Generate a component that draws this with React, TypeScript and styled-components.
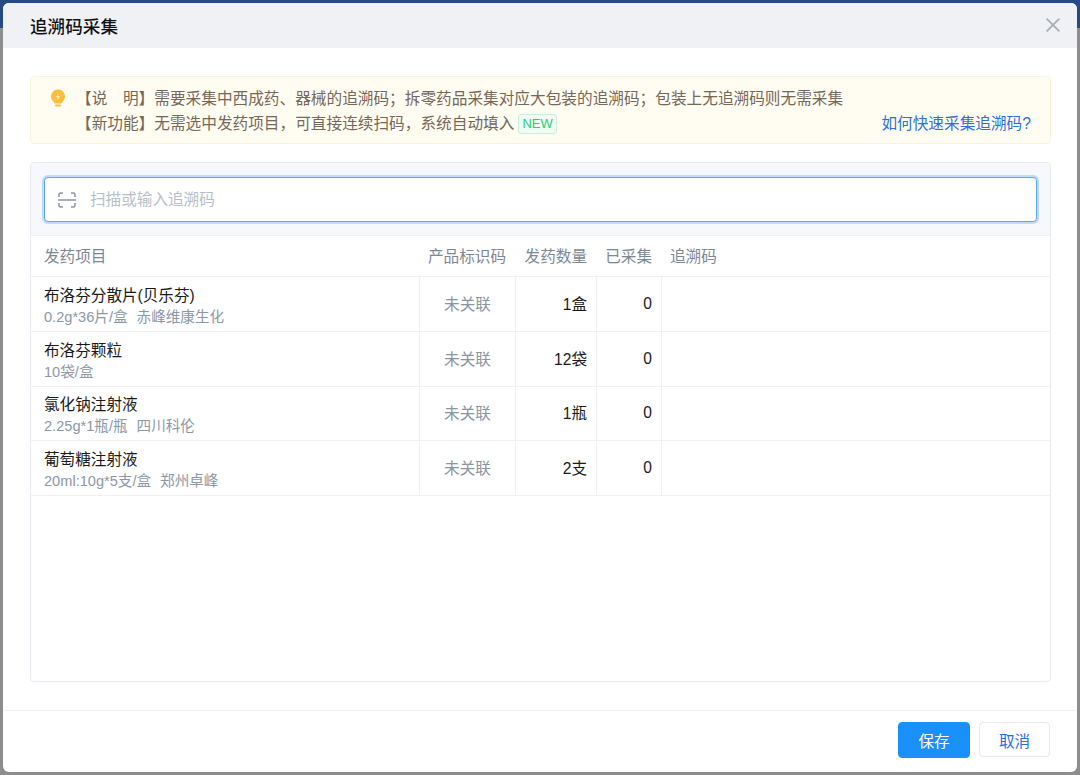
import React from 'react';
import styled, { createGlobalStyle } from 'styled-components';

interface Drug {
  name: string
  spec: string
  maker?: string
  qty: string
  collected: number
}

const drugs: Drug[] = [
  { name: '布洛芬分散片(贝乐芬)', spec: '0.2g*36片/盒', maker: '赤峰维康生化', qty: '1盒', collected: 0 },
  { name: '布洛芬颗粒', spec: '10袋/盒', qty: '12袋', collected: 0 },
  { name: '氯化钠注射液', spec: '2.25g*1瓶/瓶', maker: '四川科伦', qty: '1瓶', collected: 0 },
  { name: '葡萄糖注射液', spec: '20ml:10g*5支/盒', maker: '郑州卓峰', qty: '2支', collected: 0 }
];

const GlobalStyle = createGlobalStyle`
  html, body {
    margin: 0;
    padding: 0;
    height: 100%;
    overflow: hidden;
    font-family: "Liberation Sans", "Noto Sans CJK SC", sans-serif;
  }
  * {
    box-sizing: border-box;
  }
`;

const Backdrop = styled.div`
  width: 1080px;
  height: 775px;
  padding: 3px;
  background: linear-gradient(#274a84 0, #274a84 28px, #8d8d8d 28px);
`;

const Dialog = styled.div`
  display: flex;
  flex-direction: column;
  height: 769px;
  background: #fff;
  border-radius: 6px;
  overflow: hidden;
`;

const Header = styled.div`
  display: flex;
  align-items: center;
  justify-content: space-between;
  flex: 0 0 45px;
  padding: 0 17px 1px 27px;
  background: #eff1f5;
`;

const Title = styled.div`
  font-size: 17.6px;
  font-weight: 500;
  color: #111;
`;

const CloseBtn = styled.button`
  display: flex;
  padding: 0;
  border: 0;
  background: none;
  color: #a9aeb6;
`;

const Body = styled.div`
  display: flex;
  flex-direction: column;
  flex: 1;
  padding: 28px 26px 28px 27px;
  gap: 18px;
`;

const Notice = styled.div`
  display: flex;
  flex: 0 0 68px;
  padding: 12px 19px 0 19px;
  background: #fffdf1;
  border: 1px solid #f8f3dc;
  border-radius: 4px;
  color: #76675a;
  font-size: 15.66px;
  line-height: 25px;
`;

const BulbIcon = styled.svg`
  flex: none;
  width: 16px;
  height: 18px;
  margin: 0 10px 0 0;
`;

const NoticeLines = styled.div`
  flex: 1;
  margin-top: -3px;
`;

const NoticeLine = styled.div`
  display: flex;
  align-items: center;
  white-space: nowrap;
`;

const NewTag = styled.span`
  margin-left: 4px;
  padding: 0 3px;
  height: 20px;
  border: 1px solid #c9f1d9;
  border-radius: 3px;
  background: #effbf3;
  color: #2ecb78;
  font-size: 13px;
  line-height: 18px;
`;

const HelpLink = styled.a`
  margin-left: auto;
  color: #2a6fdb;
`;

const Panel = styled.div`
  display: flex;
  flex-direction: column;
  flex: 1;
  border: 1px solid #e8ebf1;
  border-radius: 4px;
  overflow: hidden;
`;

const ScanBar = styled.div`
  flex: 0 0 73px;
  padding: 14px 13px 0;
  background: #f6f8fb;
  border-bottom: 1px solid #eef0f4;
`;

const ScanInput = styled.div`
  display: flex;
  align-items: center;
  gap: 14px;
  height: 45px;
  padding: 0 0 3px 13px;
  background: #fff;
  border: 1px solid #5ca5fb;
  border-radius: 4px;
  box-shadow: 0 0 0 2px #bddbfd;
  color: #b7bec8;
  font-size: 15.6px;
`;

const ScanIcon = styled.svg`
  flex: none;
  margin-top: 3px;
`;

const Row = styled.div<{ $head?: boolean }>`
  display: grid;
  grid-template-columns: 388px 96px 81px 65px 1fr;
  height: ${(p) => (p.$head ? '41px' : '54.8px')};
  border-bottom: 1px solid #f0f1f4;
  font-size: 15.6px;
  color: ${(p) => (p.$head ? '#7c8794' : '#1a1a1a')};
`;

const Cell = styled.div<{ $align?: string, $divider?: boolean }>`
  display: flex;
  flex-direction: column;
  justify-content: center;
  align-items: ${(p) => p.$align || 'flex-start'};
  padding: 0 9px 2px;
  border-left: ${(p) => (p.$divider ? '1px solid #eef0f3' : '0')};
  white-space: nowrap;
`;

const NameCell = styled(Cell)`
  padding-left: 13px;
`;

const DrugCell = styled(NameCell)`
  padding-top: 5px;
  padding-bottom: 0;
`;

const CountCell = styled(Cell)`
  padding-bottom: 0;
`;

const DrugName = styled.div`
  line-height: 21px;
`;

const DrugSpec = styled.div`
  display: flex;
  gap: 9px;
  margin-top: 1px;
  color: #8c98a8;
  font-size: 14.6px;
  line-height: 21px;
`;

const Muted = styled.span`
  color: #8b95a1;
`;

const Footer = styled.div`
  display: flex;
  justify-content: flex-end;
  gap: 9px;
  flex: 0 0 62px;
  padding: 11px 27px 0 0;
  border-top: 1px solid #f1f2f5;
`;

const Button = styled.button<{ $primary?: boolean }>`
  width: ${(p) => (p.$primary ? '72px' : '71px')};
  height: ${(p) => (p.$primary ? '36px' : '35px')};
  padding: 0;
  border: 1px solid ${(p) => (p.$primary ? '#1a90fb' : '#e4e8f0')};
  border-radius: 4px;
  background: ${(p) => (p.$primary ? '#1a90fb' : '#fff')};
  color: ${(p) => (p.$primary ? '#fff' : '#2a6fdb')};
  font-family: inherit;
  font-size: 15.6px;
`;

const App = () => {
  return (
    <Backdrop>
      <GlobalStyle />
      <Dialog>
        <Header>
          <Title>追溯码采集</Title>
          <CloseBtn>
            <svg width="14" height="14" viewBox="0 0 14 14" fill="none" stroke="currentColor" strokeWidth="1.8">
              <path d="M0.6 0.6L13.4 13.4M13.4 0.6L0.6 13.4" />
            </svg>
          </CloseBtn>
        </Header>
        <Body>
          <Notice>
            <BulbIcon viewBox="0 0 16 18">
              <path
                d="M8 0.5a7 7 0 0 1 4.4 12.4c-.6.5-.9 1-.9 1.6H4.5c0-.6-.3-1.1-.9-1.6A7 7 0 0 1 8 .5z"
                fill="#fbbd3d"
              />
              <path d="M8.8 3.8L6 8.2h2l-.8 3.2L10 7.2H8z" fill="#fff3cf" />
              <rect x="5" y="15.4" width="6" height="2" rx="1" fill="#fbbd3d" />
            </BulbIcon>
            <NoticeLines>
              <NoticeLine>【说　明】需要采集中西成药、器械的追溯码；拆零药品采集对应大包装的追溯码；包装上无追溯码则无需采集</NoticeLine>
              <NoticeLine>
                【新功能】无需选中发药项目，可直接连续扫码，系统自动填入
                <NewTag>NEW</NewTag>
                <HelpLink>如何快速采集追溯码?</HelpLink>
              </NoticeLine>
            </NoticeLines>
          </Notice>
          <Panel>
            <ScanBar>
              <ScanInput>
                <ScanIcon width="18" height="16" viewBox="0 0 18 16" fill="none" stroke="#8c95a1" strokeWidth="1.5">
                  <path d="M1 5V2.500A1.500 1.500 0 0 1 2.500 1H5M13 1h2.500A1.500 1.500 0 0 1 17 2.500V5M1 11v2.500A1.500 1.500 0 0 0 2.500 15H5M13 15h2.500a1.500 1.500 0 0 0 1.500-1.500V11M0 8h18" />
                </ScanIcon>
                扫描或输入追溯码
              </ScanInput>
            </ScanBar>
            <Row $head>
              <NameCell>发药项目</NameCell>
              <Cell $align="center">产品标识码</Cell>
              <Cell $align="flex-end">发药数量</Cell>
              <Cell $align="flex-end">已采集</Cell>
              <Cell>追溯码</Cell>
            </Row>
            {drugs.map((d) => (
              <Row key={d.name}>
                <DrugCell>
                  <DrugName>{d.name}</DrugName>
                  <DrugSpec>
                    <span>{d.spec}</span>
                    {d.maker && <span>{d.maker}</span>}
                  </DrugSpec>
                </DrugCell>
                <Cell $align="center" $divider>
                  <Muted>未关联</Muted>
                </Cell>
                <Cell $align="flex-end" $divider>{d.qty}</Cell>
                <CountCell $align="flex-end" $divider>{d.collected}</CountCell>
                <Cell $divider />
              </Row>
            ))}
          </Panel>
        </Body>
        <Footer>
          <Button $primary>保存</Button>
          <Button>取消</Button>
        </Footer>
      </Dialog>
    </Backdrop>
  );
};

export default App;
